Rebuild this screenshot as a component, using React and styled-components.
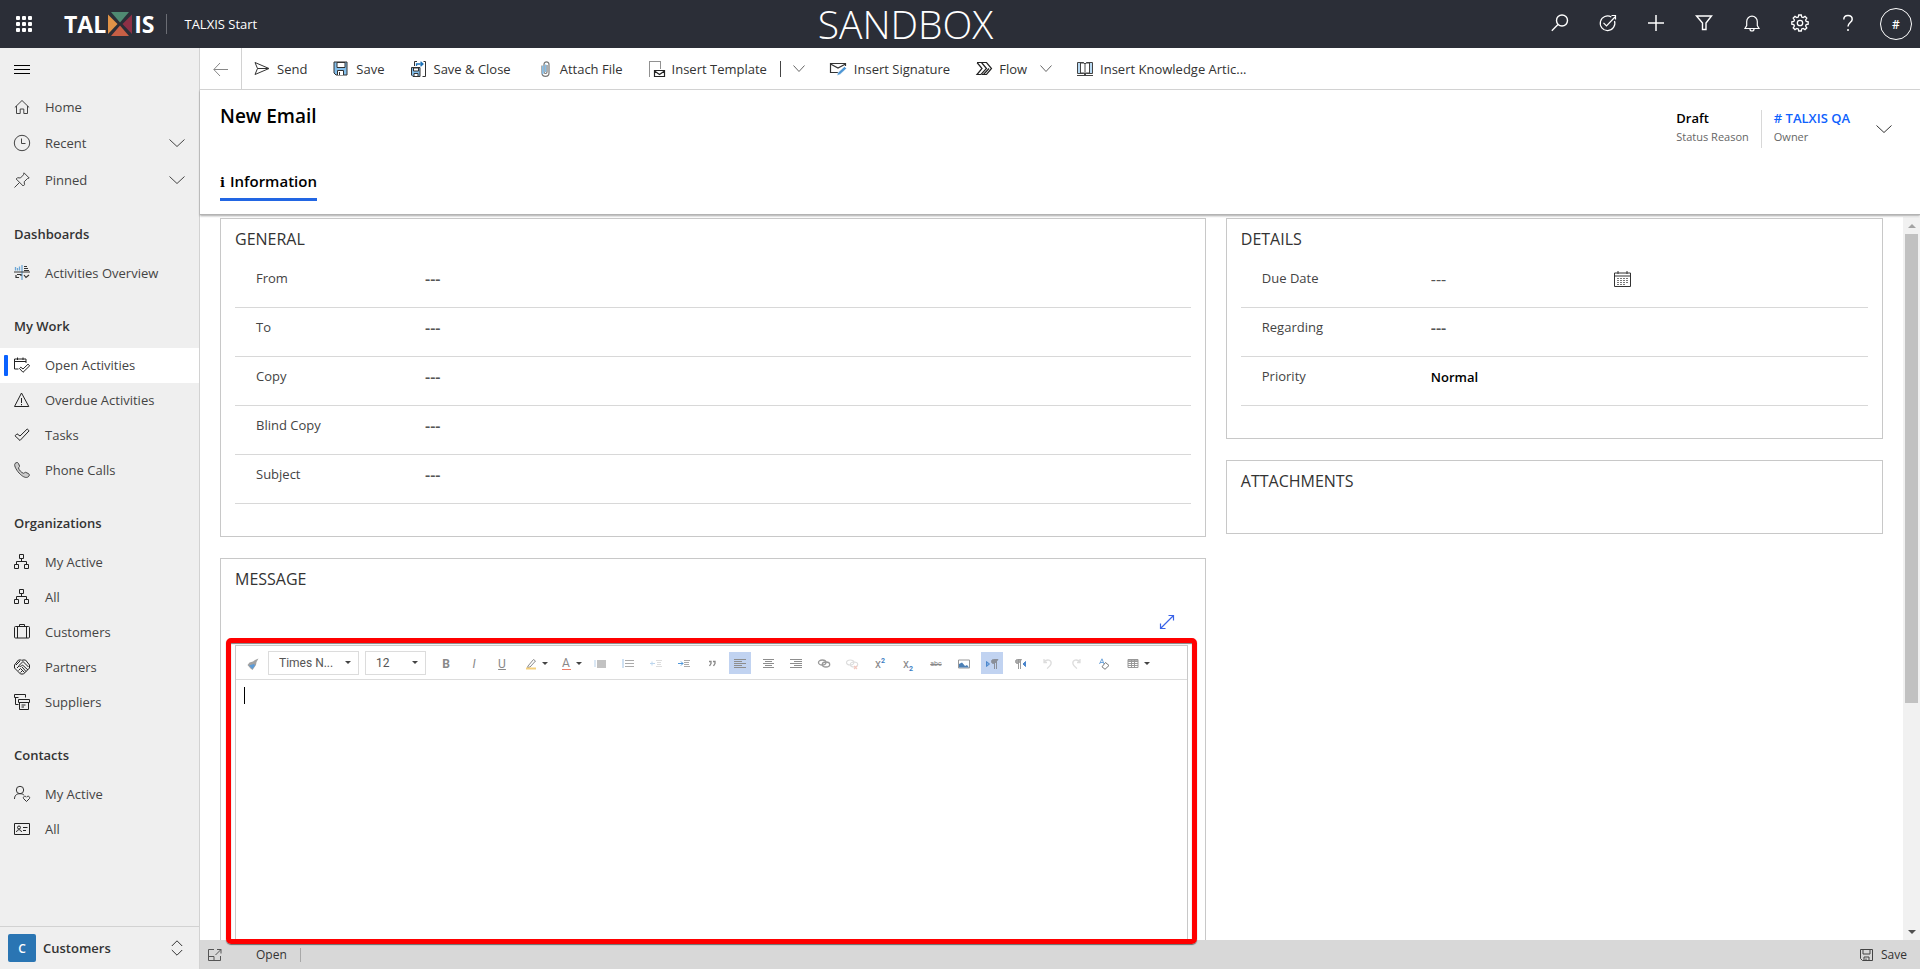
import React, { useId } from "react";
import styled, { createGlobalStyle, css } from "styled-components";

const GlobalStyle = createGlobalStyle`
  *, *::before, *::after { box-sizing: border-box; }
  html, body, #root { height: 100%; }
  body { margin: 0; overflow: hidden; background: #fff; }
  body, button, input, select, textarea {
    font-family: "Open Sans", "Noto Sans", sans-serif;
    font-size: 13px;
    color: #333;
  }
  button { background: none; border: 0; padding: 0; cursor: pointer; }
  a { color: inherit; text-decoration: none; }
  h1, h2, ul { margin: 0; padding: 0; list-style: none; }
  svg { display: block; flex: none; overflow: visible; }
`;

/* ---------- icons ---------- */

const Svg = ({ w = 16, h = 16, children, ...rest }) => (
  <svg width={w} height={h} viewBox={`0 0 ${w} ${h}`} fill="none" stroke="currentColor" strokeWidth="1" aria-hidden="true" {...rest}>
    {children}
  </svg>
);

const ChevronDown = ({ w = 16 }) => (
  <Svg w={w} h={8}>
    <path d={w === 16 ? "M.5.5 8 7.5 15.5.5" : "M.5.5 6 6.5 11.5.5"} />
  </Svg>
);

const floppy = (
  <>
    <path d="M1 1h13v13H3l-2-2z" fill="#83bfec" stroke="#333" />
    <path d="M4 1.5h8v5H4z" fill="#fff" stroke="#333" />
    <path d="M4.500 14V9.500h6V14" fill="#fff" stroke="#333" />
    <path d="M6.500 11v3" stroke="#333" />
  </>
);

const icons = {
  waffle: (
    <Svg stroke="none" fill="#fff">
      {[0, 6, 12].map((y) => [0, 6, 12].map((x) => <rect key={x + "-" + y} x={x} y={y} width="4" height="4" rx="1" />))}
    </Svg>
  ),
  search: <Svg w={18} h={18}><circle cx="11" cy="6.500" r="5.500" strokeWidth="1.400" /><path d="M7 10.500.8 16.700" strokeWidth="1.400" /></Svg>,
  target: <Svg w={18} h={18} strokeWidth="1.200"><path d="M12.300 3A7.300 7.300 0 1 0 15.500 7" /><path d="M4.500 8.800 7.500 11.800 16 3M12.500 1.500h4v4" /></Svg>,
  plus: <Svg w={18} h={18} strokeWidth="1.500"><path d="M9 1v16M1 9h16" /></Svg>,
  filter: <Svg w={18} h={18} strokeWidth="1.400"><path d="M1.500 2h15L11 9v6.500H7.500V9z" /></Svg>,
  bell: <Svg w={18} h={18} strokeWidth="1.200"><path d="M2 14.500h14l-1.700-3V7.500a5.300 5.300 0 0 0-10.600 0v4zM7 15a2 2 0 0 0 4 0" /></Svg>,
  gear: (
    <Svg w={18} h={18} strokeWidth="1.300">
      <circle cx="9" cy="9" r="2.700" />
      <path d="M7.700 1h2.600l.4 2 1.500.6 1.800-1.200 1.800 1.800-1.200 1.800.6 1.500 2 .4v2.200l-2 .4-.6 1.500 1.200 1.800-1.800 1.800-1.800-1.200-1.500.6-.4 2H7.700l-.4-2-1.500-.6L4 15.600 2.200 13.800 3.400 12l-.6-1.500-2-.4V7.900l2-.4L3.400 6 2.200 4.200 4 2.400l1.800 1.200L7.300 3z" />
    </Svg>
  ),
  help: <Svg w={18} h={18} strokeWidth="1.500"><path d="M4.800 5.500C4.800 2.800 6.500 1.500 9 1.500s4.200 1.400 4.200 3.800C13.200 8.500 9 8.700 9 12.500M9 15v2" /></Svg>,
  menu: <Svg stroke="#000"><path d="M0 4.500h16M0 8.500h16M0 12.500h16" /></Svg>,
  home: <Svg><path d="M.8 8.500 8 1.500l7.200 7M2.500 7v7.500h3.700V10h3.600v4.500h3.700V7" /></Svg>,
  clock: <Svg><circle cx="8" cy="8" r="7.700" /><path d="M7.500 3.500v5h4" /></Svg>,
  pin: <Svg><path d="M10 .8 15.200 6l-1.800.6-3.200 3.200.3 2.900-1.300 1.300-7-7L3.500 5.700l2.900.3L9.500 2.800zM5.500 10.500.5 15.500" /></Svg>,
  dashboard: (
    <Svg>
      <path d="M1.500 2v3.500M3.500 3v2.500M5.500 1.500v4M8 0v15" stroke="#6da7d6" strokeWidth="1.300" />
      <path d="M0 7h16M10 1.500h3M10 3.500h4M10 5.500h5" stroke="#333" />
      <path d="M2 10v2.500h3M3 9.500h4v1.500M10 10l2 2.500 3-2.500" stroke="#333" strokeWidth="1.200" />
    </Svg>
  ),
  calendarCheck: <Svg><path d="M4.500 12H.5V2h11.500v4M.5 4.500H12M3.500.5V3M9 .5V3" stroke="#222" /><path d="M5.500 11.500l1.300-1.300L9 12l5-4.800 1.700 1.600L9 15.300z" stroke="#222" /></Svg>,
  warning: <Svg><path d="M7.500 1 14.800 14.500H.5zM7.500 6v5M7.500 12v1.300" stroke="#222" /></Svg>,
  check: <Svg><path d="M1 8.800l2-2 3 2.200L13.200 2l1.900 1.800L6 13.500z" stroke="#222" /></Svg>,
  phone: <Svg><path d="M1 1.500C2.500.2 3.800.2 4.500 1.500l1 2.500c.3.700-.9 1.300-1 2 .3 1.800 3 4.800 5 5.300.8 0 1.300-1.200 2-1l2.800 1.200c1.400.8 1.400 2 0 3.300-2 1.500-5 .3-8-2.500S-.5 3.800 1 1.500z" fill="#ccc" stroke="#444" /></Svg>,
  org: <Svg stroke="#222"><path d="M5.500.5h4v4h-4zM.5 10.500h4v4h-4zM10.500 10.500h4v4h-4zM7.500 4.500v3M2.500 10.500v-3h10v3" /></Svg>,
  case: <Svg stroke="#222"><rect x=".5" y="2.500" width="15" height="11.500" rx="1" /><path d="M5.500 2.500v-2h5v2M3.500 2.500V14M12.500 2.500V14" /></Svg>,
  partners: (
    <Svg stroke="#222">
      <path d="M4.500 1h3L8 1.500l.8-.5h2.700L15.500 6v3l-6 6h-3l-6-6V6z" />
      <path d="M2 6l4-4M14.500 8 9 2.500 5 6.500c1 1.500 2.500 1 3.500-.5l5.500 5M3 9l2-2M4.500 11.500l2-2M6.500 13.500l2-2M8 8l4 4.500M6.500 9.500l4 4" />
    </Svg>
  ),
  boxes: <Svg stroke="#222"><path d="M4.500 3.500H.5v-3h11v3M1.500 3.500v7h3M4.500 5.500h11v3h-11zM5.500 8.500v7h9v-7M7.500 11h4M7.500 13h2.500" /></Svg>,
  personHeart: <Svg><circle cx="6" cy="4" r="3.700" stroke="#333" /><path d="M.5 13c0-3 1.500-5.300 5.500-5.300 2 0 3.200.6 4 1.500M12.500 15.500l-3-3c-.8-2 1.700-3.200 3-1.300 1.300-1.900 3.800-.7 3 1.300z" stroke="#333" /></Svg>,
  idCard: <Svg stroke="#222"><path d="M.5 2.500h15v11H.5z" /><circle cx="5" cy="6.500" r="1.500" /><path d="M2.500 11c.5-3 4.500-3 5 0M9 6.500h4.500M9 9.500h3" /></Svg>,
  upDown: <Svg w={12}><path d="M.8 6 6 .8 11.200 6M.8 10 6 15.200 11.200 10" /></Svg>,
  back: <Svg w={15} stroke="#888"><path d="M15 8.500H1M7 2 .8 8.500 7 15" /></Svg>,
  send: <Svg stroke="#333"><path d="M1 1.500 15 7.500 1 13.500 3.500 7.500zM3.500 7.500H14" /></Svg>,
  save: <Svg>{floppy}</Svg>,
  saveClose: (
    <Svg>
      <path d="M.5 6.500h8.500v9H2l-1.500-1.500z" fill="#83bfec" stroke="#333" />
      <path d="M2.500 7h5v3h-5zM3 15v-2.500h4V15" fill="#fff" stroke="#333" />
      <path d="M3.500 5V.5H6M12.500.5h2v15h-3" stroke="#333" />
      <path d="M5.500 5V3h6M9.500.8 12 3 9.500 5.300" stroke="#1d72b8" strokeWidth="1.300" />
    </Svg>
  ),
  clip: <Svg><path d="M5 4.500V12c0 4.500 7 4.500 7 0V3.500C12 0 7 0 7 3.500V11c0 2 3 2 3 0V4" stroke="#777" strokeWidth="1.200" /><path d="M8.500 3.500V11M5.800 5v8" stroke="#83bfec" strokeWidth="1.500" /></Svg>,
  template: (
    <Svg>
      <path d="M.5 15.500V.5h11v7" stroke="#222" strokeDasharray="1 1" />
      <path d="M5.500 9.500h10v6h-10zM5.500 10l5 3.500 5-3.500" stroke="#222" strokeWidth="1.200" fill="#fff" />
    </Svg>
  ),
  signature: (
    <Svg w={17}>
      <path d="M8 11.500H.5V2.500h15V5M.5 3l7.500 4L15.500 3" stroke="#333" strokeWidth="1.200" />
      <path d="M7 14.500l1-3 6.500-6 2 2-6.500 6z" fill="#4e96d4" stroke="#fff" strokeWidth=".500" />
    </Svg>
  ),
  flow: <Svg stroke="#222" strokeWidth="1.200"><path d="M1 1.500h9.500l5 6-5 6H6M1 1.500l5 6-5 6h4l5.500-6-5-6M7.500 13.500l5.500-6" /></Svg>,
  book: <Svg><path d="M.5 1.500h6L8 3l1.500-1.500h6v11h-6L8 14l-1.500-1.500h-6z" fill="#b9daf3" stroke="#444" /><path d="M3.500 2v10h3.500l1 1 1-1h3.500V2H9L8 3 7 2z" fill="#fff" stroke="#444" /><path d="M8 3v10M0 14.500h16" stroke="#444" /></Svg>,
  calendar: (
    <Svg w={17}>
      <path d="M.5 2h16v13.500H.5zM.5 5h16M4 0v3M13 0v3" stroke="#333" />
      <path d="M3 7.500h11M3 9.500h11M3 11.500h11M3 13.500h8" stroke="#555" strokeDasharray="2 1" strokeWidth=".800" />
    </Svg>
  ),
  expand: <Svg><path d="M1.500 14.500 14.500 1.500M9.500 1.500h5v5M1.500 9.500v5h5" stroke="#3a63e8" strokeWidth="1.200" /></Svg>,
  popout: <Svg w={14} h={12}><path d="M6 .5H.5v11h12V7M.5 7.500H6v4M7.500 6 13 .5M9 .5h4v4" stroke="#555" /></Svg>,
  footSave: <Svg w={13} h={12}><path d="M.5.5h12v11h-10l-2-2zM3 .5V5h7V.5M4 11.500V8h5v3.500M6 9.500v2" stroke="#444" /></Svg>,
};

/* ---------- rich text toolbar glyphs ---------- */

const textLines = (offsets) => (
  <Svg w={12} h={12} stroke="#8d8d8d">
    {offsets.map(([x1, x2], i) => <path key={i} d={`M${x1} ${1.5 + i * 2}H${x2}`} />)}
  </Svg>
);

const glyphs = {
  brush: <Svg w={12} h={12} stroke="none"><path d="M11.500.5 8 2 6 3.500 2.500 4.500.5 7l3 3.500L5.500 12 9 7l.5-3z" fill="#a2a2a2" /><path d="M2 7.500 7 6l1 1.500L5.500 11z" fill="#5b9bd8" /></Svg>,
  highlight: <Svg w={12} h={12}><path d="M3 8 8.500 1.500l2 1.500L5 9l-2.500.5z" stroke="#8a8a8a" /><path d="M1 10.500h10" stroke="#f5cf7a" strokeWidth="2" /></Svg>,
  bullets: <Svg w={12} h={12} stroke="none"><rect x="0" y="2" width="2" height="7" fill="#dbe8f5" /><rect x="3" y="2" width="9" height="8" fill="#c2c2c2" /></Svg>,
  numbers: <Svg w={12} h={12}><path d="M1 1v9" stroke="#9fc3e6" /><path d="M3 2.500h9M3 5.500h9M3 8.500h9" stroke="#aaa" /></Svg>,
  outdent: <Svg w={12} h={12}><path d="M0 5.500h5M2 3.500v4" stroke="#bcd6ee" /><path d="M6 2.500h6M7 4.500h4M7 6.500h4M6 8.500h6" stroke="#ddd" /></Svg>,
  indent: <Svg w={12} h={12}><path d="M0 5.500h5M3 3.500l2 2-2 2" stroke="#4f97da" /><path d="M6 2.500h6M6 4.500h5M6 6.500h5M6 8.500h6" stroke="#aaa" /></Svg>,
  quote: <Svg w={8} h={8} stroke="#888"><path d="M1 1.500h2v2L1.500 6M5 1.500h2v2L5.500 6" strokeWidth="1.300" /></Svg>,
  left: textLines([[0, 12], [0, 8], [0, 12], [0, 8], [0, 12]]),
  center: textLines([[1, 12], [3, 10], [1, 12], [3, 10], [1, 12]]),
  right: textLines([[0, 12], [4, 12], [0, 12], [4, 12], [0, 12]]),
  link: <Svg w={12} h={12} stroke="#999" strokeWidth="1.300"><ellipse cx="4.200" cy="4.500" rx="3.700" ry="2.500" /><ellipse cx="8" cy="6.500" rx="3.700" ry="2.500" /></Svg>,
  unlink: <Svg w={12} h={12} stroke="#ddd" strokeWidth="1.200"><ellipse cx="4.200" cy="4.500" rx="3.700" ry="2.500" /><ellipse cx="8" cy="6.500" rx="3.700" ry="2.500" /><path d="M8 8l3 3M11 8l-3 3" stroke="#f3c8bf" /></Svg>,
  image: <Svg w={12} h={12}><path d="M.5 2h11v8H.5z" stroke="#999" /><path d="M1 9.500V6l3-1.500 3 3.500 2-1 2 2.500z" fill="#4b7fb5" stroke="none" /></Svg>,
  ltr: <Svg w={12} h={12}><path d="M.5 3.500v5l3-2.500z" fill="#7aa9e0" stroke="#4b86cc" /><path d="M8.500 11V1.500M10.500 11V1.500M12 1.500H7.500a2 2 0 0 0 0 4h1z" stroke="#8a8f99" fill="#8a8f99" /></Svg>,
  rtl: <Svg w={12} h={12}><path d="M11.500 3.500v5L9 6z" fill="#4b86cc" stroke="#4b86cc" /><path d="M4.500 11V1.500M6.500 11V1.500M7.500 1.500H3.500a2 2 0 0 0 0 4h1z" stroke="#999" fill="#aaa" /></Svg>,
  undo: <Svg w={12} h={12} stroke="#ddd" strokeWidth="1.300"><path d="M2 1v3.500h3M2 4C5 .500 10 2 9 6c-.500 2-2 3-4 4.500" /></Svg>,
  redo: <Svg w={12} h={12} stroke="#ddd" strokeWidth="1.300"><path d="M10 1v3.500H7M10 4C7 .500 2 2 3 6c.500 2 2 3 4 4.500" /></Svg>,
  clear: <Svg w={12} h={12}><path d="M1.500 6 4 .8 6 6M2 4.500h3.500" stroke="#6fa5dc" /><path d="M7.500 4.500 11 7.500 7 11.300 4 8.800z" stroke="#777" /></Svg>,
  table: <Svg w={12} h={12} stroke="#999"><path d="M1 1.500h10v8H1z" /><path d="M1 3.500h10M1 5.500h10M1 7.500h10M4.500 1.500v8M7.500 1.500v8" /><path d="M1 2h10" strokeWidth="1.500" /></Svg>,
};

/* ---------- shell ---------- */

const Page = styled.div`
  display: flex;
  flex-direction: column;
  height: 100vh;
`;

const TopBar = styled.header`
  display: flex;
  align-items: center;
  height: 48px;
  flex: none;
  background: #2b2e37;
  color: #fff;
`;

const Brand = styled.div`
  display: flex;
  align-items: center;
  width: 275px;
`;

const WaffleButton = styled.button`
  padding: 0 16px;
  margin-right: 16px;
`;

const Logo = styled.a`
  display: flex;
  align-items: center;
  gap: 2px;
  font-size: 23px;
  line-height: 24px;
  font-weight: 700;
`;

const BrandDivider = styled.span`
  width: 1px;
  height: 20px;
  margin: 0 17px 0 12px;
  background: #6b6d74;
`;

const AppName = styled.a`
  font-weight: 500;
  line-height: 20px;
  white-space: nowrap;
`;

const EnvironmentName = styled.div`
  flex: 1;
  text-align: center;
  font-size: 39px;
  line-height: 48px;
  font-weight: 300;
`;

const TopActions = styled.nav`
  display: flex;
`;

const TopButton = styled.button`
  display: grid;
  place-items: center;
  width: 48px;
  height: 48px;
  padding-bottom: ${(p) => (p.$avatar ? "0" : "2px")};
  color: #fff;
`;

const Avatar = styled.span`
  display: grid;
  place-items: center;
  width: 32px;
  height: 32px;
  border: 1px solid #fff;
  border-radius: 50%;
  font-size: 12px;
  font-weight: 600;
`;

const Body = styled.div`
  display: flex;
  flex: 1;
  min-height: 0;
`;

/* ---------- sidebar ---------- */

const Sidebar = styled.nav`
  display: flex;
  flex-direction: column;
  width: 200px;
  flex: none;
  background: #efefef;
  border-right: 1px solid #d2d2d2;
`;

const MenuButton = styled.button`
  height: 42px;
  padding: 0 14px;
  display: flex;
  align-items: center;
`;

const GroupTitle = styled.h2`
  height: 57px;
  padding: 25px 14px 0;
  font-size: 13px;
  line-height: 20px;
  font-weight: 600;
`;

const NavLink = styled.a`
  position: relative;
  display: flex;
  align-items: center;
  gap: 15px;
  height: ${(p) => (p.$tall ? "37px" : "35px")};
  padding: 0 14px 2px;
  color: #444;
  ${(p) => p.$active && css`
    background: #fff;
    &::before {
      content: "";
      position: absolute;
      left: 4px;
      top: 7px;
      bottom: 7px;
      width: 4px;
      border-radius: 1px;
      background: #0a62ff;
    }
  `}
`;

const NavLabel = styled.span`
  flex: 1;
  white-space: nowrap;
`;

const AreaSwitch = styled.button`
  display: flex;
  align-items: center;
  gap: 7px;
  height: 43px;
  margin-top: auto;
  padding: 0 16px 0 8px;
  border-top: 1px solid #d2d2d2;
  text-align: left;
  font-weight: 600;
`;

const AreaBadge = styled.span`
  display: grid;
  place-items: center;
  width: 28px;
  height: 28px;
  border-radius: 2px;
  background: #2a75b3;
  color: #fff;
  font-size: 12px;
`;

/* ---------- main ---------- */

const Main = styled.main`
  display: flex;
  flex-direction: column;
  flex: 1;
  min-width: 0;
`;

const CommandBar = styled.div`
  display: flex;
  align-items: stretch;
  height: 42px;
  flex: none;
  border-bottom: 1px solid #d8d8d8;
`;

const BackButton = styled.button`
  width: 42px;
  padding-left: 13px;
  border-right: 1px solid #d2d2d2;
  margin-right: 12px;
`;

const Command = styled.button`
  display: flex;
  align-items: center;
  gap: 7px;
  margin-right: ${(p) => (p.$split ? "13px" : "26px")};
  white-space: nowrap;
`;

const CommandMenu = styled.button`
  display: flex;
  align-items: center;
  margin-right: 25px;
  color: #666;
`;

const CommandDivider = styled.span`
  width: 1px;
  height: 16px;
  align-self: center;
  margin-right: 12px;
  background: #444;
`;

const FormHeader = styled.section`
  position: relative;
  z-index: 1;
  display: flex;
  justify-content: space-between;
  height: 125px;
  flex: none;
  padding: 13px 28px 0 20px;
  border-bottom: 1px solid #b3b3b3;
  box-shadow: 0 1px 2px rgba(0, 0, 0, 0.35);
`;

const FormTitle = styled.h1`
  font-size: 19px;
  line-height: 26px;
  font-weight: 600;
  color: #000;
`;

const Tab = styled.button`
  margin-top: 39px;
  padding-bottom: 2px;
  border-bottom: 3px solid #2266e3;
  font-size: 15px;
  line-height: 26px;
  font-weight: 600;
  color: #000;
`;

const TabMark = styled.span`
  font-family: "DejaVu Serif", serif;
  font-size: 13px;
  font-weight: 700;
  margin-right: 5px;
`;

const HeaderFields = styled.div`
  display: flex;
  align-items: center;
  height: 38px;
  margin-top: 7px;
`;

const HeaderField = styled.div`
  padding: 0 12px;
  height: 38px;
  line-height: 18px;
  font-size: 11px;
  color: #666;
  white-space: nowrap;
  & + & { border-left: 1px solid #d8d8d8; }
`;

const HeaderValue = styled.div`
  display: block;
  margin-bottom: 2px;
  font-size: 13px;
  line-height: 16px;
  font-weight: 600;
  color: ${(p) => (p.$link ? "#0f62fe" : "#000")};
`;

const HeaderToggle = styled.button`
  margin-left: 14px;
`;

const ScrollArea = styled.div`
  display: flex;
  flex: 1;
  min-height: 0;
  padding-top: 2px;
`;

const Columns = styled.div`
  display: grid;
  grid-template-columns: 3fr 2fr;
  gap: 20px;
  flex: 1;
  min-width: 0;
  padding: 1px 20px 0;
`;

const Column = styled.div`
  display: flex;
  flex-direction: column;
  gap: 21px;
  min-width: 0;
`;

const Card = styled.section`
  padding: 8px 14px ${(p) => (p.$open ? "0" : "32px")};
  border: 1px solid #c8c8c8;
  ${(p) => p.$open && css`
    display: flex;
    flex-direction: column;
    flex: 1;
    border-bottom: 0;
  `}
`;

const CardTitle = styled.h2`
  height: 32px;
  flex: none;
  font-size: 16px;
  line-height: 24px;
  font-weight: 400;
  color: #333;
`;

const FieldRow = styled.div`
  display: grid;
  grid-template-columns: ${(p) => (p.$narrow ? "169px 183px 1fr" : "169px 1fr")};
  height: 49px;
  padding: 9px 0 0 21px;
  border-bottom: 1px solid #d8d8d8;
`;

const FieldLabel = styled.label`
  line-height: 20px;
  color: #444;
`;

const valueStyle = css`
  width: 100%;
  height: 20px;
  margin-top: 1px;
  padding: 0;
  border: 0;
  outline: 0;
  background: none;
  appearance: none;
`;

const FieldInput = styled.input`
  ${valueStyle}
  font-size: 16px;
  font-weight: ${(p) => (p.$light ? 400 : 600)};
  color: #555;
`;

const FieldSelect = styled.select`
  ${valueStyle}
  font-weight: 600;
  color: #000;
`;

const DateButton = styled.button`
  display: flex;
  padding-top: 3px;
`;

const ExpandBar = styled.div`
  display: flex;
  align-items: flex-start;
  justify-content: flex-end;
  height: 46px;
  flex: none;
  padding: 15px 16px 0 0;
`;

const Editor = styled.div`
  position: relative;
  display: flex;
  flex-direction: column;
  flex: 1;
  margin-right: 3px;
  border: 1px solid #c8c8c8;
  border-bottom: 0;
`;

const Highlight = styled.div`
  position: absolute;
  z-index: 2;
  inset: -8px -10px -4px;
  border: 5px solid #ff0000;
  border-radius: 5px;
  box-shadow: 0 1px 1px rgba(0, 0, 0, 0.5), inset 0 1px 1px rgba(0, 0, 0, 0.5);
  pointer-events: none;
`;

const EditorToolbar = styled.div`
  display: flex;
  align-items: center;
  gap: 6px;
  height: 34px;
  flex: none;
  padding-left: 8px;
  border-bottom: 1px solid #dcdcdc;
  overflow: hidden;
`;

const toolWidths = { menu: "29px", slim: "18px" };

const ToolButton = styled.button`
  display: flex;
  align-items: center;
  justify-content: center;
  gap: 5px;
  width: ${(p) => toolWidths[p.$kind] || "22px"};
  height: 22px;
  flex: none;
  padding-top: 2px;
  padding-left: ${(p) => (p.$kind === "menu" ? "6px" : "0")};
  background: ${(p) => (p.$kind === "active" ? "#c1d3f1" : "none")};
`;

const ToolLetter = styled.span`
  width: ${(p) => (p.$small ? "auto" : "12px")};
  text-align: center;
  font-family: Roboto, sans-serif;
  font-size: ${(p) => (p.$small ? "7px" : "12px")};
  line-height: 12px;
  color: #888;
  font-weight: ${(p) => (p.$bold ? 700 : 400)};
  font-style: ${(p) => (p.$italic ? "italic" : "normal")};
  text-decoration: ${(p) => (p.$underline ? "underline" : p.$strike ? "line-through" : "none")};
  & sup, & sub { font-size: 7px; line-height: 0; color: #3b7fc4; font-weight: 700; }
`;

const ColorLetter = styled(ToolLetter)`
  width: 9px;
  border-bottom: 1px solid #ee7d68;
`;

const MenuArrow = styled.span`
  border: 3px solid transparent;
  border-top-color: #444;
  border-bottom: 0;
`;

const PickerBox = styled.label`
  display: flex;
  align-items: center;
  width: ${(p) => (p.$wide ? "91px" : "61px")};
  height: 24px;
  flex: none;
  padding: 0 7px 0 10px;
  border: 1px solid #dcdcdc;
  margin-right: ${(p) => (p.$wide ? "0" : "3px")};
`;

const Picker = styled.select`
  flex: 1;
  min-width: 0;
  height: 20px;
  padding: 0;
  border: 0;
  appearance: none;
  background: none;
  font-family: Roboto, sans-serif;
  font-size: 12px;
  color: #555;
`;

const EditorBody = styled.div`
  position: relative;
  display: flex;
  flex: 1;
`;

const MessageText = styled.textarea`
  flex: 1;
  padding: 8px;
  border: 0;
  outline: 0;
  resize: none;
  background: none;
  font-family: "Liberation Serif", serif;
  font-size: 16px;
`;

const Caret = styled.span`
  position: absolute;
  left: 8px;
  top: 7px;
  width: 1px;
  height: 17px;
  background: #000;
`;

const ScrollTrack = styled.div`
  display: flex;
  flex-direction: column;
  align-items: center;
  width: 17px;
  flex: none;
  background: #f1f1f1;
`;

const ScrollArrow = styled.span`
  height: 17px;
  display: grid;
  place-items: center;
  flex: none;
  &::before {
    content: "";
    border: 4px solid transparent;
    ${(p) => p.$up
      ? css`border-bottom-color: #a3a3a3; border-top: 0;`
      : css`border-top-color: #505050; border-bottom: 0;`}
  }
`;

const ScrollLane = styled.div`
  flex: 1;
  width: 13px;
`;

const ScrollThumb = styled.div`
  height: 68%;
  background: #c1c1c1;
`;

const StatusBar = styled.footer`
  display: flex;
  align-items: center;
  justify-content: space-between;
  height: 29px;
  flex: none;
  padding: 0 13px 0 8px;
  background: #d8d8d8;
`;

const StatusGroup = styled.div`
  display: flex;
  align-items: center;
`;

const StatusButton = styled.button`
  display: flex;
  align-items: center;
  gap: 8px;
  margin-right: ${(p) => (p.$icon ? "34px" : "0")};
  font-size: 12px;
`;

const StatusDivider = styled.span`
  width: 1px;
  height: 14px;
  margin-left: 13px;
  background: #a8a8a8;
`;

/* ---------- data ---------- */

const topActions = ["search", "target", "plus", "filter", "bell", "gear", "help"];

const navGroups = [
  { items: [["Home", "home"], ["Recent", "clock", "tall"], ["Pinned", "pin", "tall"]] },
  { title: "Dashboards", items: [["Activities Overview", "dashboard"]] },
  { title: "My Work", items: [["Open Activities", "calendarCheck", "active"], ["Overdue Activities", "warning"], ["Tasks", "check"], ["Phone Calls", "phone"]] },
  { title: "Organizations", items: [["My Active", "org"], ["All", "org"], ["Customers", "case"], ["Partners", "partners"], ["Suppliers", "boxes"]] },
  { title: "Contacts", items: [["My Active", "personHeart"], ["All", "idCard"]] },
];

const commands = [
  { label: "Send", icon: "send" },
  { label: "Save", icon: "save" },
  { label: "Save & Close", icon: "saveClose" },
  { label: "Attach File", icon: "clip" },
  { label: "Insert Template", icon: "template", menu: true, divider: true },
  { label: "Insert Signature", icon: "signature" },
  { label: "Flow", icon: "flow", menu: true },
  { label: "Insert Knowledge Artic...", icon: "book" },
];

const tools = [
  ["Bold", <ToolLetter $bold>B</ToolLetter>],
  ["Italic", <ToolLetter $italic>I</ToolLetter>],
  ["Underline", <ToolLetter $underline>U</ToolLetter>],
  ["Highlight color", glyphs.highlight, "menu"],
  ["Font color", <ColorLetter>A</ColorLetter>, "menu"],
  ["Bulleted list", glyphs.bullets],
  ["Numbered list", glyphs.numbers],
  ["Decrease indent", glyphs.outdent],
  ["Increase indent", glyphs.indent],
  ["Block quote", glyphs.quote],
  ["Align left", glyphs.left, "active"],
  ["Align center", glyphs.center],
  ["Align right", glyphs.right],
  ["Link", glyphs.link],
  ["Unlink", glyphs.unlink],
  ["Superscript", <ToolLetter>x<sup>2</sup></ToolLetter>],
  ["Subscript", <ToolLetter>x<sub>2</sub></ToolLetter>],
  ["Strikethrough", <ToolLetter $small $strike>abc</ToolLetter>],
  ["Insert image", glyphs.image],
  ["Left to right", glyphs.ltr, "active"],
  ["Right to left", glyphs.rtl],
  ["Undo", glyphs.undo],
  ["Redo", glyphs.redo],
  ["Clear formatting", glyphs.clear],
  ["Table", glyphs.table, "menu"],
];

/* ---------- pieces ---------- */

function TextField({ label, narrow, light, children }) {
  const id = useId();
  return (
    <FieldRow $narrow={narrow}>
      <FieldLabel htmlFor={id}>{label}</FieldLabel>
      <FieldInput id={id} defaultValue="---" $light={light} />
      {children}
    </FieldRow>
  );
}

function LogoMark() {
  return (
    <Svg w={24} h={24} stroke="none">
      <path d="M3 0h18l-9 10.500z" fill="#4f8a72" />
      <path d="M0 2.500 9.500 12 0 22z" fill="#e09347" />
      <path d="M24 2.500 14.500 12 24 22z" fill="#8d3046" />
      <path d="M3 24h18l-9-10.500z" fill="#c75f45" />
    </Svg>
  );
}

export default function App() {
  return (
    <Page>
      <GlobalStyle />
      <TopBar>
        <Brand>
          <WaffleButton aria-label="App launcher">{icons.waffle}</WaffleButton>
          <Logo href="#" aria-label="TALXIS">TAL<LogoMark />IS</Logo>
          <BrandDivider />
          <AppName href="#">TALXIS Start</AppName>
        </Brand>
        <EnvironmentName>SANDBOX</EnvironmentName>
        <TopActions>
          {topActions.map((name) => <TopButton key={name} aria-label={name}>{icons[name]}</TopButton>)}
          <TopButton aria-label="Account" $avatar><Avatar>#</Avatar></TopButton>
        </TopActions>
      </TopBar>

      <Body>
        <Sidebar>
          <MenuButton aria-label="Site map">{icons.menu}</MenuButton>
          {navGroups.map((group) => (
            <React.Fragment key={group.title || "top"}>
              {group.title && <GroupTitle>{group.title}</GroupTitle>}
              {group.items.map(([label, icon, kind]) => (
                <NavLink key={label} href="#" $active={kind === "active"} $tall={kind === "tall"}>
                  {icons[icon]}
                  <NavLabel>{label}</NavLabel>
                  {kind === "tall" && <ChevronDown />}
                </NavLink>
              ))}
            </React.Fragment>
          ))}
          <AreaSwitch>
            <AreaBadge>C</AreaBadge>
            <NavLabel>Customers</NavLabel>
            {icons.upDown}
          </AreaSwitch>
        </Sidebar>

        <Main>
          <CommandBar>
            <BackButton aria-label="Back">{icons.back}</BackButton>
            {commands.map((c) => (
              <React.Fragment key={c.label}>
                <Command $split={c.menu}>{icons[c.icon]}{c.label}</Command>
                {c.divider && <CommandDivider />}
                {c.menu && <CommandMenu aria-label={`${c.label} options`}><ChevronDown w={12} /></CommandMenu>}
              </React.Fragment>
            ))}
          </CommandBar>

          <FormHeader>
            <div>
              <FormTitle>New Email</FormTitle>
              <Tab><TabMark>i</TabMark>Information</Tab>
            </div>
            <HeaderFields>
              <HeaderField><HeaderValue>Draft</HeaderValue>Status Reason</HeaderField>
              <HeaderField><HeaderValue as="a" href="#" $link># TALXIS QA</HeaderValue>Owner</HeaderField>
              <HeaderToggle aria-label="More header fields"><ChevronDown /></HeaderToggle>
            </HeaderFields>
          </FormHeader>

          <ScrollArea>
            <Columns>
              <Column>
                <Card>
                  <CardTitle>GENERAL</CardTitle>
                  {["From", "To", "Copy", "Blind Copy", "Subject"].map((l) => <TextField key={l} label={l} />)}
                </Card>
                <Card $open>
                  <CardTitle>MESSAGE</CardTitle>
                  <ExpandBar><button aria-label="Expand editor">{icons.expand}</button></ExpandBar>
                  <Editor>
                    <Highlight />
                    <EditorToolbar>
                      <ToolButton aria-label="Copy formatting" $kind="slim">{glyphs.brush}</ToolButton>
                      <PickerBox $wide>
                        <Picker aria-label="Font"><option>Times N...</option></Picker>
                        <MenuArrow />
                      </PickerBox>
                      <PickerBox>
                        <Picker aria-label="Size"><option>12</option></Picker>
                        <MenuArrow />
                      </PickerBox>
                      {tools.map(([label, glyph, kind]) => (
                        <ToolButton key={label} aria-label={label} $kind={kind}>
                          {glyph}
                          {kind === "menu" && <MenuArrow />}
                        </ToolButton>
                      ))}
                    </EditorToolbar>
                    <EditorBody>
                      <MessageText aria-label="Message" />
                      <Caret />
                    </EditorBody>
                  </Editor>
                </Card>
              </Column>
              <Column>
                <Card>
                  <CardTitle>DETAILS</CardTitle>
                  <TextField label="Due Date" narrow light>
                    <DateButton aria-label="Pick a date">{icons.calendar}</DateButton>
                  </TextField>
                  <TextField label="Regarding" narrow />
                  <FieldRow $narrow>
                    <FieldLabel htmlFor="priority">Priority</FieldLabel>
                    <FieldSelect id="priority"><option>Normal</option></FieldSelect>
                  </FieldRow>
                </Card>
                <Card>
                  <CardTitle>ATTACHMENTS</CardTitle>
                </Card>
              </Column>
            </Columns>
            <ScrollTrack>
              <ScrollArrow $up />
              <ScrollLane><ScrollThumb /></ScrollLane>
              <ScrollArrow />
            </ScrollTrack>
          </ScrollArea>

          <StatusBar>
            <StatusGroup>
              <StatusButton $icon aria-label="Open in new window">{icons.popout}</StatusButton>
              <StatusButton>Open</StatusButton>
              <StatusDivider />
            </StatusGroup>
            <StatusButton>{icons.footSave}Save</StatusButton>
          </StatusBar>
        </Main>
      </Body>
    </Page>
  );
}
